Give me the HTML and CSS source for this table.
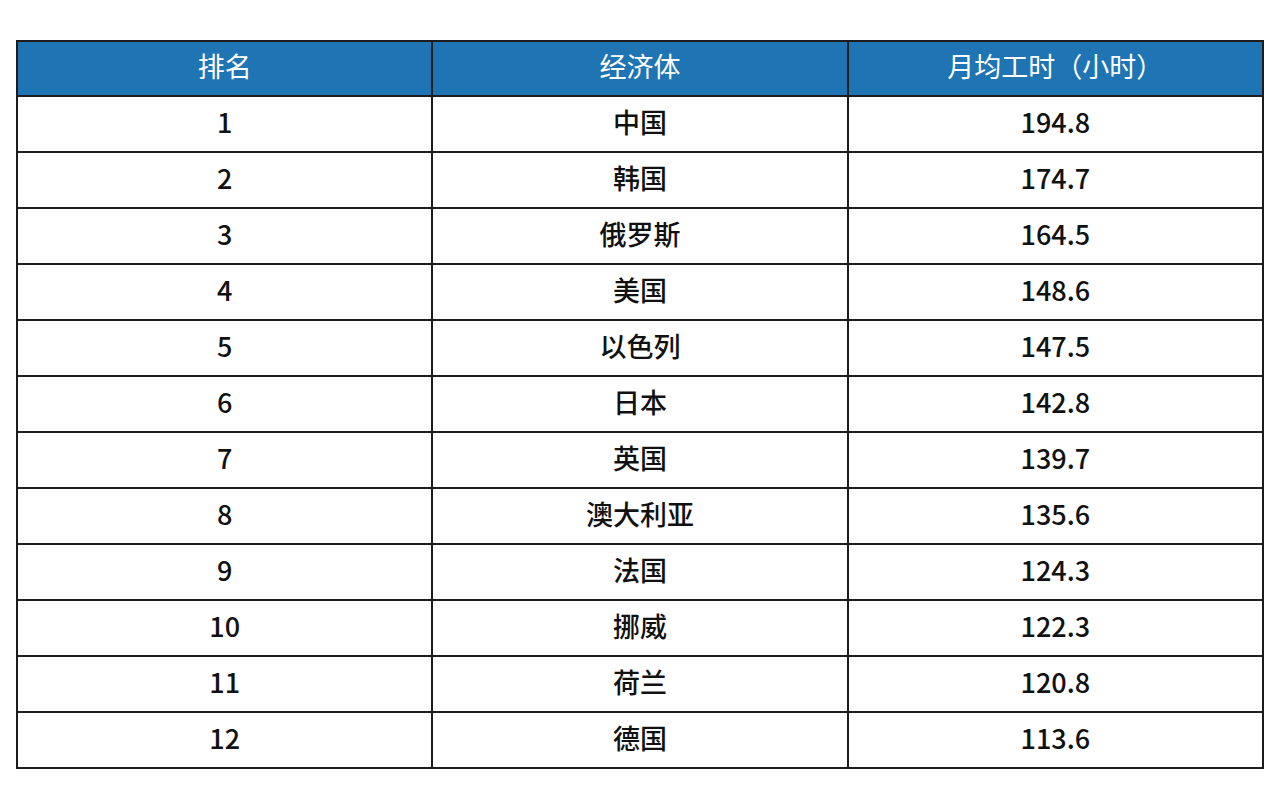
FILE: index.html
```html
<!DOCTYPE html>
<html lang="zh">
<head>
<meta charset="utf-8">
<link rel="stylesheet" href="styles.css">
</head>
<body>
<table class="rank">
<thead>
<tr><th>排名</th><th>经济体</th><th>月均工时（小时）</th></tr>
</thead>
<tbody>
<tr><td>1</td><td>中国</td><td>194.8</td></tr>
<tr><td>2</td><td>韩国</td><td>174.7</td></tr>
<tr><td>3</td><td>俄罗斯</td><td>164.5</td></tr>
<tr><td>4</td><td>美国</td><td>148.6</td></tr>
<tr><td>5</td><td>以色列</td><td>147.5</td></tr>
<tr><td>6</td><td>日本</td><td>142.8</td></tr>
<tr><td>7</td><td>英国</td><td>139.7</td></tr>
<tr><td>8</td><td>澳大利亚</td><td>135.6</td></tr>
<tr><td>9</td><td>法国</td><td>124.3</td></tr>
<tr><td>10</td><td>挪威</td><td>122.3</td></tr>
<tr><td>11</td><td>荷兰</td><td>120.8</td></tr>
<tr><td>12</td><td>德国</td><td>113.6</td></tr>
</tbody>
</table>
</body>
</html>
```
FILE: styles.css
```css
html, body {
  margin: 0;
  padding: 0;
  background: #ffffff;
}
body {
  padding: 40px 16px 0 16px;
  font-family: "Noto Sans CJK SC", "Noto Sans", sans-serif;
}
.rank {
  width: 1248px;
  border-collapse: collapse;
  table-layout: fixed;
  border: 2px solid #1c1c1c;
}
.rank th,
.rank td {
  height: 56px;
  padding: 0 0 6px 0;
  box-sizing: border-box;
  text-align: center;
  vertical-align: middle;
  border: 2px solid #1c1c1c;
  font-size: 27px;
  line-height: 1;
}
.rank th {
  height: 55px;
  background: #1f74b4;
  color: #ffffff;
  font-weight: 400;
}
.rank td {
  color: #111111;
  font-weight: 500;
}
```
